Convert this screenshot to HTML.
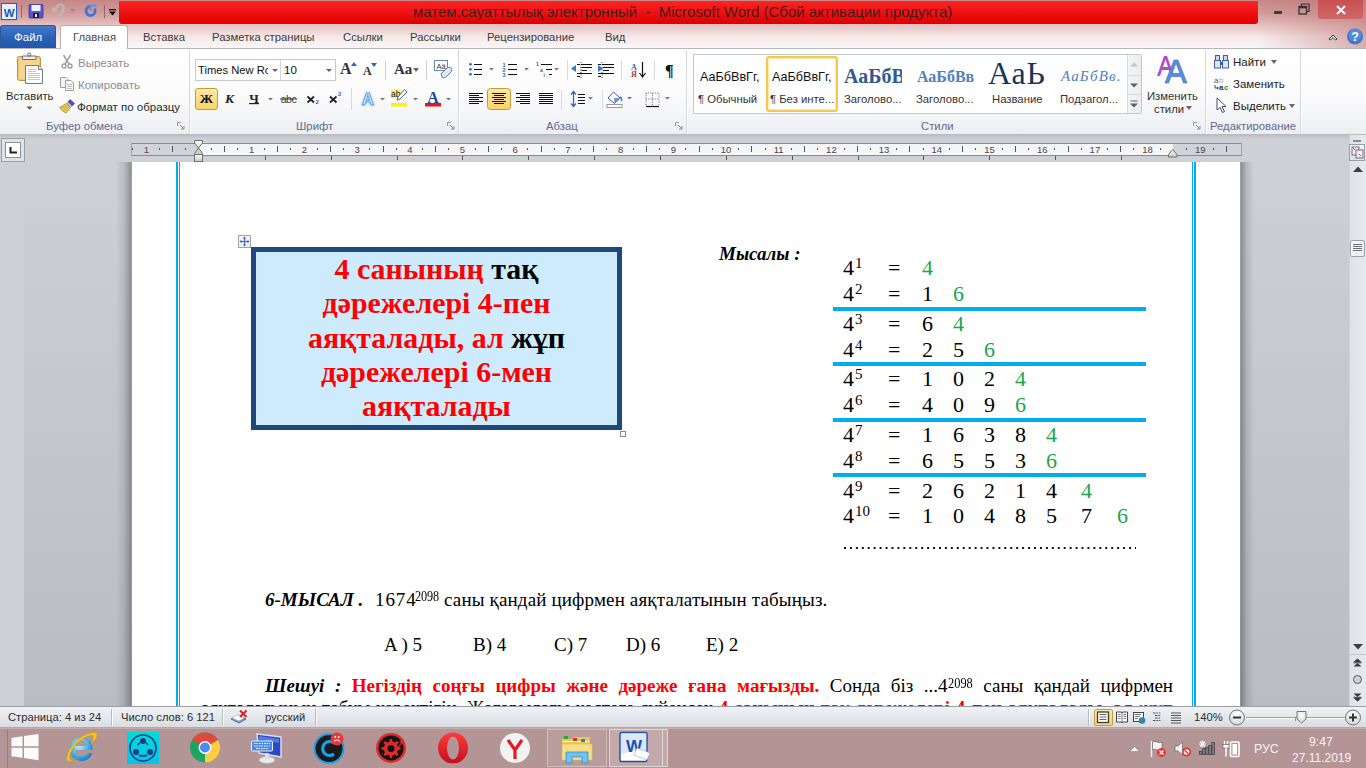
<!DOCTYPE html>
<html><head><meta charset="utf-8">
<style>
*{margin:0;padding:0;box-sizing:border-box}
html,body{width:1366px;height:768px;overflow:hidden;background:#cdd0d5;font-family:"Liberation Sans",sans-serif}
.a{position:absolute;white-space:nowrap}
.s{font-family:"Liberation Sans",sans-serif}
.r{font-family:"Liberation Serif",serif}
#frame{position:absolute;left:0;top:0;width:1366px;height:49px;background:linear-gradient(90deg,rgba(190,115,115,0) 0%,rgba(190,115,115,0) 92%,rgba(190,115,115,0.55) 100%),linear-gradient(180deg,#c78787 0%,#d39d9d 28%,#e6c3c3 52%,#f6e9e9 76%,#fcf7f7 100%)}
#redbar{position:absolute;left:119px;top:1px;width:1139px;height:23px;background:linear-gradient(180deg,#ff2424,#dd0000);border-radius:0 0 3px 3px}
#ribbon{position:absolute;left:0;top:48px;width:1366px;height:87px;background:linear-gradient(180deg,#ffffff 0%,#fbfbfc 55%,#eceef2 100%);border-top:1px solid #b4b7bc;border-bottom:1px solid #9ca0a6}
.sep{position:absolute;top:50px;width:2px;height:84px;border-left:1px solid #d6d8dc;border-right:1px solid #ffffff}
.glab{position:absolute;top:120px;font-size:11.3px;color:#636a8e;white-space:nowrap}
.tab{position:absolute;top:31px;font-size:11.3px;color:#3b3b3b;white-space:nowrap}
#page{position:absolute;left:132px;top:162px;width:1108px;height:544px;background:#fff}
#status{position:absolute;left:0;top:706px;width:1366px;height:22px;background:linear-gradient(180deg,#f0f2f5,#d9dde2);border-top:1px solid #9a9ea5;border-bottom:1px solid #a9adb3}
#task{position:absolute;left:0;top:728px;width:1366px;height:40px;background:#b49595}
.t{position:absolute;font-family:"Liberation Serif",serif;font-size:22px;line-height:1;white-space:nowrap;color:#000}
.t sup{font-size:15px;vertical-align:0;position:relative;top:-7px;margin-left:1px}
.g{color:#1aa64b}
.sp{font-size:14.4px;vertical-align:0;position:relative;top:-4px;display:inline-block;transform:scaleX(0.86);transform-origin:0 0;margin-right:-3.5px;line-height:1}
.tb{position:absolute;left:256px;width:361px;text-align:center;font-family:"Liberation Serif",serif;font-weight:bold;font-size:29.9px;line-height:1;color:#ff0000;white-space:nowrap}
.k{color:#000}
</style></head><body>

<div id="frame"></div>
<div id="redbar"></div>
<div class="a s" style="left:413px;top:3px;font-size:15px;color:#461a1a">матем.сауаттылық электронный&nbsp; - &nbsp;Microsoft Word (Сбой активации продукта)</div>


<!-- quick access -->
<svg class="a" style="left:0;top:2px" width="120" height="20" viewBox="0 0 120 20">
 <rect x="1.5" y="1.5" width="15" height="16" fill="#fff" stroke="#2a62b8" stroke-width="1.2"/>
 <rect x="2.5" y="2.5" width="13" height="14" fill="#e8f0fb"/>
 <text x="9" y="14.5" font-family="Liberation Sans" font-weight="bold" font-size="11.5" fill="#1f55b8" text-anchor="middle" letter-spacing="-0.5">W</text>
 <line x1="21.5" y1="3" x2="21.5" y2="16" stroke="#8a6a6a" stroke-width="1"/>
 <rect x="29" y="2.5" width="14" height="13.5" rx="1" fill="#5b55c9" stroke="#3a3a9a" stroke-width="0.8"/>
 <rect x="31.5" y="3" width="9" height="6" fill="#eef2ff"/>
 <rect x="33" y="11" width="6" height="5" fill="#202030"/>
 <rect x="35" y="12" width="2" height="3" fill="#e8e8e8"/>
 <path d="M55.5 7.5 C57 3.5 60 2 62 3 C64.5 4.5 64 9.5 59.5 14" fill="none" stroke="#bdb5b5" stroke-width="2.6" stroke-linecap="round"/>
 <path d="M52 4 L52 10 L58 10 Z" fill="#bdb5b5"/>
 <path d="M70 7 L75 7 L72.5 10 Z" fill="#9a8585"/>
 <path d="M90.3 4.3 A4.6 4.6 0 1 0 94.6 6.6" fill="none" stroke="#3a74d6" stroke-width="2.7"/>
 <path d="M89.3 2.6 L96.6 2.6 L96.6 4.6 L91.6 4.6 L91.6 8.6 L89.3 8.6 Z" fill="#5a92ea"/>
 <line x1="104.5" y1="3" x2="104.5" y2="16" stroke="#8a6a6a" stroke-width="1"/>
 <rect x="109" y="7" width="7" height="1.3" fill="#111"/>
 <path d="M109 9.5 L116 9.5 L112.5 13.5 Z" fill="#111"/>
</svg>
<!-- window controls -->
<div class="a" style="left:1274px;top:11px;width:8px;height:3px;background:#3a3a3a;border-radius:1px"></div>
<svg class="a" style="left:1298px;top:3px" width="12" height="12" viewBox="0 0 12 12"><rect x="1" y="3.5" width="7.5" height="7.5" fill="none" stroke="#333" stroke-width="1.3"/><rect x="1" y="3.5" width="7.5" height="1.8" fill="#333"/><path d="M3.5 3.5 L3.5 1 L11 1 L11 8.5 L8.5 8.5" fill="none" stroke="#333" stroke-width="1.2"/></svg>
<div class="a" style="left:1318px;top:0;width:45px;height:19px;background:linear-gradient(180deg,#c85050,#d06868);border-radius:0 0 3px 3px"></div>
<svg class="a" style="left:1335px;top:5px" width="12" height="10" viewBox="0 0 12 10"><path d="M2 1 L10 9 M10 1 L2 9" stroke="#fff" stroke-width="2"/></svg>
<!-- help -->
<svg class="a" style="left:1323px;top:27px" width="43" height="20" viewBox="0 0 43 20">
 <path d="M6 12 L10 8 L14 12 L12.5 13 L10 10.5 L7.5 13 Z" fill="#fff" stroke="#333" stroke-width="1"/>
 <circle cx="32" cy="9.5" r="8" fill="#3f78cc"/><circle cx="32" cy="8" r="6.5" fill="#5d92de" opacity="0.7"/>
 <text x="32" y="14" font-family="Liberation Sans" font-weight="bold" font-size="12.5" fill="#fff" text-anchor="middle">?</text>
</svg>

<!-- tabs -->
<div class="a" style="left:0;top:25px;width:56px;height:23px;background:linear-gradient(180deg,#4278c8,#2a5fb5 60%,#2256ac);border:1px solid #2a56a0;border-bottom:none;border-radius:3px 3px 0 0"></div>
<div class="a s" style="left:14px;top:31px;font-size:11.5px;color:#fff">Файл</div>
<div class="a" style="left:60px;top:25px;width:68px;height:24px;background:#fff;border:1px solid #b0b3b8;border-bottom:none;border-radius:3px 3px 0 0;z-index:2"></div>
<div class="tab" style="left:73px;z-index:3;color:#4a4a4a">Главная</div>
<div class="tab" style="left:143px">Вставка</div>
<div class="tab" style="left:212px">Разметка страницы</div>
<div class="tab" style="left:343px">Ссылки</div>
<div class="tab" style="left:410px">Рассылки</div>
<div class="tab" style="left:487px">Рецензирование</div>
<div class="tab" style="left:605px">Вид</div>

<div id="ribbon"></div>
<div class="sep" style="left:189px"></div>
<div class="sep" style="left:458px"></div>
<div class="sep" style="left:686px"></div>
<div class="sep" style="left:1205px"></div>
<div class="sep" style="left:1300px"></div>
<div class="glab" style="left:46px">Буфер обмена</div>
<div class="glab" style="left:296px">Шрифт</div>
<div class="glab" style="left:546px">Абзац</div>
<div class="glab" style="left:921px">Стили</div>
<div class="glab" style="left:1210px">Редактирование</div>
<!-- group: clipboard -->
<svg class="a" style="left:14px;top:52px" width="32" height="36" viewBox="0 0 32 36">
 <rect x="3.5" y="4.5" width="23" height="24" rx="2" fill="#f2c46a" stroke="#c09048" stroke-width="1"/>
 <rect x="5" y="6" width="20" height="21" rx="1" fill="#f7d58e"/>
 <path d="M8.5 4 L22 4 L22 7.5 L8.5 7.5 Z" fill="#eeeeee" stroke="#6e6e6e" stroke-width="1"/>
 <circle cx="15.2" cy="2.6" r="1.6" fill="none" stroke="#6e6e6e" stroke-width="1"/>
 <path d="M11.5 13.5 L24.5 13.5 L28.5 17.5 L28.5 31.5 L11.5 31.5 Z" fill="#fff" stroke="#6e7c8e" stroke-width="1"/>
 <path d="M24.5 13.5 L24.5 17.5 L28.5 17.5" fill="#e2e8f0" stroke="#6e7c8e" stroke-width="1"/>
 <path d="M14 17.5 H22 M14 19.5 H22 M14 21.5 H26 M14 23.5 H26 M14 25.5 H26 M14 27.5 H26" stroke="#b9c6d6" stroke-width="1"/>
</svg>
<div class="a" style="left:6px;top:89.5px;font-size:11.2px;color:#2b2b2b">Вставить</div>
<svg class="a" style="left:26px;top:106px" width="7" height="5"><path d="M0.5 0.5 L6.5 0.5 L3.5 3.8 Z" fill="#555"/></svg>

<svg class="a" style="left:60px;top:54px" width="14" height="15" viewBox="0 0 14 15">
 <path d="M3.5 1 L9 10 M10.5 1 L5 10" stroke="#a0a0a0" stroke-width="1.5" fill="none"/>
 <circle cx="4" cy="12" r="2" fill="none" stroke="#9a9a9a" stroke-width="1.3"/>
 <circle cx="10" cy="12" r="2" fill="none" stroke="#9a9a9a" stroke-width="1.3"/>
</svg>
<div class="a" style="left:78px;top:56.5px;font-size:11.5px;color:#8d8d8d">Вырезать</div>
<svg class="a" style="left:59px;top:76px" width="16" height="15" viewBox="0 0 16 15">
 <path d="M1.5 1.5 H7 L9 3.5 V11.5 H1.5 Z" fill="#f4f4f4" stroke="#9c9c9c" stroke-width="1"/>
 <path d="M6.5 4.5 H12 L14.5 7 V14.5 H6.5 Z" fill="#f8f8f8" stroke="#9c9c9c" stroke-width="1"/>
 <path d="M8 8.5 H13 M8 10.5 H13 M8 12.5 H13" stroke="#b4b4b4" stroke-width="0.8"/>
</svg>
<div class="a" style="left:78px;top:78.5px;font-size:11.5px;color:#8d8d8d">Копировать</div>
<svg class="a" style="left:58px;top:98px" width="18" height="16" viewBox="0 0 18 16">
 <path d="M12 1.5 L16.5 5.5 L14 8 L10 4 Z" fill="#5050b8" stroke="#303080" stroke-width="0.6"/>
 <path d="M10 4 L14 8 L12.5 9.5 L8.5 5.5 Z" fill="#c8c8d0" stroke="#777" stroke-width="0.5"/>
 <path d="M8.5 5.5 L12.5 9.5 L8 15 C6 14 3 12 1.5 9.5 Z" fill="#e8cc58" stroke="#9a7e2a" stroke-width="0.7"/>
 <path d="M3.5 10 L9.5 8 M5.5 12.5 L10.5 9.5" stroke="#b89a30" stroke-width="0.6"/>
</svg>
<div class="a" style="left:77px;top:100.5px;font-size:11.5px;color:#2b2b2b">Формат по образцу</div>
<svg class="a" style="left:177px;top:122px" width="8" height="8" viewBox="0 0 8 8"><path d="M0.5 0.5 H4 M0.5 0.5 V4" stroke="#9a9a9a" stroke-width="1"/><path d="M3 3 L7 7 M7 4 V7 H4" stroke="#8a8a8a" stroke-width="1" fill="none"/></svg>
<svg class="a" style="left:447px;top:122px" width="8" height="8" viewBox="0 0 8 8"><path d="M0.5 0.5 H4 M0.5 0.5 V4" stroke="#9a9a9a" stroke-width="1"/><path d="M3 3 L7 7 M7 4 V7 H4" stroke="#8a8a8a" stroke-width="1" fill="none"/></svg>
<svg class="a" style="left:675px;top:122px" width="8" height="8" viewBox="0 0 8 8"><path d="M0.5 0.5 H4 M0.5 0.5 V4" stroke="#9a9a9a" stroke-width="1"/><path d="M3 3 L7 7 M7 4 V7 H4" stroke="#8a8a8a" stroke-width="1" fill="none"/></svg>
<svg class="a" style="left:1193px;top:122px" width="8" height="8" viewBox="0 0 8 8"><path d="M0.5 0.5 H4 M0.5 0.5 V4" stroke="#9a9a9a" stroke-width="1"/><path d="M3 3 L7 7 M7 4 V7 H4" stroke="#8a8a8a" stroke-width="1" fill="none"/></svg>

<!-- group: font -->
<div class="a" style="left:195px;top:59px;width:141px;height:22px;background:#fff;border:1px solid #c5c8cd"></div>
<div class="a" style="left:280px;top:60px;width:1px;height:20px;background:#d4d6da"></div>
<div class="a" style="left:198px;top:63.5px;width:70px;overflow:hidden;font-size:11.2px;color:#111">Times New Roman</div>
<svg class="a" style="left:272px;top:69px" width="6" height="3"><path d="M0 0 H6 L3 3 Z" fill="#666"/></svg>
<div class="a" style="left:284px;top:63.5px;font-size:11.5px;color:#111">10</div>
<svg class="a" style="left:326px;top:69px" width="6" height="3"><path d="M0 0 H6 L3 3 Z" fill="#666"/></svg>
<div class="a r" style="left:340px;top:61px;font-size:16px;font-weight:bold;color:#333;line-height:1">A</div>
<svg class="a" style="left:351px;top:62px" width="6" height="4"><path d="M0 4 L3 0 L6 4 Z" fill="#2a64c8"/></svg>
<div class="a r" style="left:363px;top:65px;font-size:12px;font-weight:bold;color:#333;line-height:1">A</div>
<svg class="a" style="left:371px;top:63px" width="6" height="4"><path d="M0 0 L6 0 L3 4 Z" fill="#2a64c8"/></svg>
<div class="a" style="left:385px;top:60px;width:2px;height:20px;border-left:1px solid #cfd1d5;border-right:1px solid #fff"></div>
<div class="a r" style="left:394px;top:62px;font-size:15px;font-weight:bold;color:#333;line-height:1">Aa</div>
<svg class="a" style="left:413px;top:68px" width="6" height="4"><path d="M0 0 H6 L3 4 Z" fill="#666"/></svg>
<div class="a" style="left:426px;top:60px;width:2px;height:20px;border-left:1px solid #cfd1d5;border-right:1px solid #fff"></div>
<svg class="a" style="left:433px;top:59px" width="20" height="20" viewBox="0 0 20 20">
 <rect x="1.5" y="1.5" width="13" height="10" fill="#fff" stroke="#6a87b0" stroke-width="1"/>
 <text x="8" y="9.5" font-family="Liberation Sans" font-size="7.5" fill="#334" text-anchor="middle">Aä</text>
 <path d="M8 15 L14 9 C15 8 17 8 18 9 C19 10 19 12 18 13 L13 18 C12 19 10 19 9 18 Z" fill="#dfe8f6" stroke="#5a7db5" stroke-width="1"/>
</svg>
<!-- row 2 -->
<div class="a" style="left:195px;top:88px;width:23px;height:22px;background:linear-gradient(180deg,#fde9a6,#fbd36a);border:1px solid #c29b3f;border-radius:3px"></div>
<svg class="a" style="left:195px;top:88px" width="260" height="22" viewBox="0 0 260 22">
 <text x="11.5" y="15.2" font-family="Liberation Serif" font-weight="bold" font-size="13.5" fill="#111" text-anchor="middle">Ж</text>
 <text x="34.5" y="15.2" font-family="Liberation Serif" font-weight="bold" font-style="italic" font-size="13.5" fill="#222" text-anchor="middle">К</text>
 <text x="59" y="14.8" font-family="Liberation Serif" font-weight="bold" font-size="13" fill="#222" text-anchor="middle">Ч</text>
 <rect x="54" y="15" width="10" height="1.2" fill="#222"/>
 <path d="M73 10 H78 L75.5 12.5 Z" fill="#777"/>
 <text x="93.5" y="15" font-family="Liberation Sans" font-size="10.5" fill="#444" text-anchor="middle" letter-spacing="-0.4">abc</text>
 <rect x="85" y="10.5" width="17" height="1" fill="#333"/>
 <path d="M112.5 8.5 L119 14.5 M119 8.5 L112.5 14.5" stroke="#222" stroke-width="1.8"/>
 <text x="120.5" y="15.5" font-family="Liberation Sans" font-weight="bold" font-size="6" fill="#2a64c8">2</text>
 <path d="M135 8.5 L141.5 14.5 M141.5 8.5 L135 14.5" stroke="#222" stroke-width="1.8"/>
 <text x="143" y="7.5" font-family="Liberation Sans" font-weight="bold" font-size="6" fill="#2a64c8">2</text>
 <line x1="156.5" y1="0" x2="156.5" y2="22" stroke="#d6d8dc"/>
 <text x="173" y="17" font-family="Liberation Sans" font-weight="bold" font-size="17" fill="#dff0ff" stroke="#5a9ae4" stroke-width="1" text-anchor="middle" style="filter:drop-shadow(0 0 1.5px #9fd0ff)">A</text>
 <path d="M185 10 H190 L187.5 12.5 Z" fill="#777"/>
 <rect x="196" y="2" width="10" height="8" fill="#f4ee72"/>
 <text x="196" y="9" font-family="Liberation Sans" font-size="8.5" fill="#222">ab</text>
 <path d="M209.5 1.5 L212 4 L205 11 L202 12 L203 9 Z" fill="#fff" stroke="#3d67b0" stroke-width="1"/>
 <rect x="196" y="15" width="16" height="3.5" fill="#fff200"/>
 <path d="M218 10 H223 L220.5 12.5 Z" fill="#777"/>
 <text x="238" y="14.5" font-family="Liberation Serif" font-weight="bold" font-size="16" fill="#2346a0" text-anchor="middle">A</text>
 <rect x="230" y="15" width="16" height="3.5" fill="#e8141b"/>
 <path d="M251 10 H256 L253.5 12.5 Z" fill="#777"/>
</svg>
<!-- group: paragraph -->
<svg class="a" style="left:460px;top:55px" width="226" height="60" viewBox="0 0 226 60">
 <g fill="#2f5fb8"><circle cx="10.5" cy="9.3" r="1.3"/><circle cx="10.5" cy="14.3" r="1.3"/><circle cx="10.5" cy="19.3" r="1.3"/></g>
 <path d="M14 9.5 H22 M14 14.5 H22 M14 19.5 H22" stroke="#111" stroke-width="1"/>
 <path d="M29 13 H34 L31.5 15.5 Z" fill="#777"/>
 <g font-family="Liberation Sans" font-size="5.5" font-weight="bold" fill="#2f5fb8"><text x="42.5" y="11.5">1</text><text x="42.5" y="16.5">2</text><text x="42.5" y="21.5">3</text></g>
 <path d="M48 9.5 H57 M48 14.5 H57 M48 19.5 H57" stroke="#111" stroke-width="1"/>
 <path d="M64 13 H69 L66.5 15.5 Z" fill="#777"/>
 <g font-family="Liberation Sans" font-size="5" font-weight="bold" fill="#2f5fb8"><text x="76" y="11">1</text><text x="80" y="16.5">a</text><text x="83.5" y="22">i</text></g>
 <path d="M81 9.5 H92 M86 14.5 H92 M89 19.5 H92" stroke="#111" stroke-width="1"/>
 <path d="M94 13 H99 L96.5 15.5 Z" fill="#777"/>
 <line x1="107.5" y1="5" x2="107.5" y2="25" stroke="#d8dadd"/>
 <!-- decrease indent -->
 <path d="M117 9.5 H120 M121 9.5 H132 M122 12.5 H132 M122 15.5 H127 M117 18.5 H132 M117 21.5 H120" stroke="#111" stroke-width="1.2"/>
 <path d="M121 12 V16 M121 7 V24" stroke="#111" stroke-width="0.8" stroke-dasharray="1 1.5"/>
 <path d="M111 13.5 L116 10 L116 17 Z" fill="#3a78d8"/>
 <path d="M138 9.5 H141 M142 9.5 H154 M143 12.5 H154 M143 15.5 H149 M138 18.5 H154 M138 21.5 H141" stroke="#111" stroke-width="1.2"/>
 <path d="M142 7 V24" stroke="#111" stroke-width="0.8" stroke-dasharray="1 1.5"/>
 <path d="M143 13.5 L138 10 L138 17 Z" fill="#3a78d8"/>
 <line x1="161.5" y1="5" x2="161.5" y2="25" stroke="#d8dadd"/>
 <text x="171" y="15" font-family="Liberation Serif" font-weight="bold" font-size="8" fill="#2f5fb8">A</text>
 <text x="171" y="22" font-family="Liberation Serif" font-weight="bold" font-size="8" fill="#a04040">Я</text>
 <path d="M182.5 7 V21" stroke="#111" stroke-width="1.2"/><path d="M179.5 18 L182.5 22 L185.5 18" fill="none" stroke="#111" stroke-width="1.2"/>
 <line x1="194.5" y1="5" x2="194.5" y2="25" stroke="#d8dadd"/>
 <text x="205" y="21" font-family="Liberation Serif" font-weight="bold" font-size="16" fill="#111">¶</text>
 <!-- row 2 -->
 <path d="M9 38.5 H23 M9 40.5 H19 M9 42.5 H23 M9 44.5 H19 M9 46.5 H23 M9 48.5 H19" stroke="#111" stroke-width="1"/>
 <rect x="27.5" y="33.5" width="23" height="21" rx="3" fill="url(#gold)" stroke="#c29b3f"/>
 <path d="M32 38.5 H46 M34 40.5 H44 M32 42.5 H46 M34 44.5 H44 M32 46.5 H46 M34 48.5 H44" stroke="#111" stroke-width="1"/>
 <path d="M56 38.5 H70 M60 40.5 H70 M56 42.5 H70 M60 44.5 H70 M56 46.5 H70 M60 48.5 H70" stroke="#111" stroke-width="1"/>
 <path d="M79 38.5 H93 M79 40.5 H93 M79 42.5 H93 M79 44.5 H93 M79 46.5 H93 M79 48.5 H93" stroke="#111" stroke-width="1"/>
 <line x1="101.5" y1="35" x2="101.5" y2="55" stroke="#d8dadd"/>
 <path d="M113.5 37 V51" stroke="#2f5fb8" stroke-width="1.2"/><path d="M111 39.5 L113.5 36.5 L116 39.5 M111 48.5 L113.5 51.5 L116 48.5" fill="none" stroke="#2f5fb8" stroke-width="1.2"/>
 <path d="M118 39.5 H125 M118 42.5 H125 M118 45.5 H125 M118 48.5 H125" stroke="#111" stroke-width="1.1"/>
 <path d="M128 42 H133 L130.5 44.5 Z" fill="#777"/>
 <line x1="142.5" y1="35" x2="142.5" y2="55" stroke="#d8dadd"/>
 <path d="M148 43 L153.5 37 L160 43 L154.5 48.5 Z" fill="#fff" stroke="#2f5fb8" stroke-width="1"/>
 <path d="M154 43 L160 43 L154.5 48.5 Z" fill="#6a96dc"/>
 <path d="M160 42 C162 43 162 45 161 46" stroke="#3a78d8" stroke-width="1.5" fill="none"/>
 <rect x="147" y="49.5" width="15" height="3" fill="#fff" stroke="#999" stroke-width="1"/>
 <path d="M167 42 H172 L169.5 44.5 Z" fill="#777"/>
 <path d="M186 38 H199 V50 M186 38 V50 M192.5 38 V50 M186 44 H199" stroke="#555" stroke-width="0.8" stroke-dasharray="1 1.2" fill="none"/>
 <path d="M186 51.5 H199" stroke="#111" stroke-width="1.2"/>
 <path d="M205 42 H210 L207.5 44.5 Z" fill="#777"/>
 <defs><linearGradient id="gold" x1="0" y1="0" x2="0" y2="1"><stop offset="0" stop-color="#fde9a6"/><stop offset="1" stop-color="#fbd36a"/></linearGradient></defs>
</svg>
<!-- group: styles -->
<div class="a" style="left:693px;top:54px;width:449px;height:60px;background:#fff;border:1px solid #c4c7cc;border-radius:0 2px 2px 0"></div>
<div class="a" style="left:1127px;top:55px;width:14px;height:58px;background:linear-gradient(90deg,#f4f5f7,#e9ebee);border-left:1px solid #d8dadd"></div>
<div class="a" style="left:1127px;top:75px;width:14px;height:1px;background:#d8dadd"></div>
<div class="a" style="left:1127px;top:94px;width:14px;height:1px;background:#d8dadd"></div>
<svg class="a" style="left:1130px;top:62px" width="8" height="5"><path d="M0 4.5 L4 0.5 L8 4.5 Z" fill="#c4c4c4"/></svg>
<svg class="a" style="left:1130px;top:83px" width="8" height="5"><path d="M0 0.5 L8 0.5 L4 4.5 Z" fill="#606060"/></svg>
<svg class="a" style="left:1130px;top:100px" width="8" height="8"><path d="M0.5 1 H7.5" stroke="#606060" stroke-width="1"/><path d="M0 3.5 L8 3.5 L4 7.5 Z" fill="#606060"/></svg>
<div class="a" style="left:766px;top:56px;width:72px;height:56px;border:2px solid #f4c653;border-radius:3px;box-shadow:inset 0 0 0 1px #ffeaa6"></div>
<div class="a s" style="left:700px;top:70.5px;font-size:12.6px;color:#111;line-height:1">АаБбВвГг,</div>
<div class="a s" style="left:698px;top:93.5px;font-size:11.3px;color:#333;line-height:1">¶ Обычный</div>
<div class="a s" style="left:772px;top:70.5px;font-size:12.6px;color:#111;line-height:1">АаБбВвГг,</div>
<div class="a s" style="left:770px;top:93.5px;font-size:11.3px;color:#333;line-height:1">¶ Без инте...</div>
<div class="a" style="left:844px;top:60px;width:58px;height:26px;overflow:hidden"><div class="a r" style="left:0;top:6.4px;font-size:20px;font-weight:bold;color:#2f5a93;line-height:1">АаБбВв</div></div>
<div class="a s" style="left:844px;top:93.5px;font-size:11.3px;color:#333;line-height:1">Заголово...</div>
<div class="a" style="left:916px;top:60px;width:60px;height:26px;overflow:hidden"><div class="a r" style="left:1px;top:9.2px;font-size:16px;font-weight:bold;color:#4f81bd;line-height:1">АаБбВв</div></div>
<div class="a s" style="left:916px;top:93.5px;font-size:11.3px;color:#333;line-height:1">Заголово...</div>
<div class="a r" style="left:988px;top:56.5px;font-size:32px;color:#17365d;line-height:1;letter-spacing:0.8px">АаЬ</div>
<div class="a s" style="left:992px;top:93.5px;font-size:11.3px;color:#333;line-height:1">Название</div>
<div class="a r" style="left:1061px;top:68.6px;font-size:15px;font-style:italic;color:#4f81bd;line-height:1;letter-spacing:1.2px">АаБбВв.</div>
<div class="a s" style="left:1060px;top:93.5px;font-size:11.3px;color:#333;line-height:1">Подзагол...</div>

<svg class="a" style="left:1155px;top:54px" width="36" height="31" viewBox="0 0 36 31">
 <path d="M2 22 L9 2 L12 2 L19 22 L16 22 L14 16 L7 16 L5 22 Z M8 13 L13 13 L10.5 5.5 Z" fill="#b44bc8"/>
 <path d="M10 29 L19 6 L23 6 L32 29 L28.5 29 L26 22.5 L16 22.5 L13.5 29 Z M17 19.5 L25 19.5 L21 9 Z" fill="#5b8ee0" stroke="#3a68b8" stroke-width="0.6"/>
</svg>
<div class="a s" style="left:1147px;top:90.5px;font-size:11.3px;color:#333;line-height:1">Изменить</div>
<div class="a s" style="left:1154px;top:103.5px;font-size:11.3px;color:#333;line-height:1">стили</div>
<svg class="a" style="left:1186px;top:106px" width="6" height="4"><path d="M0 0 H6 L3 4 Z" fill="#666"/></svg>

<!-- group: editing -->
<svg class="a" style="left:1213px;top:54px" width="17" height="15" viewBox="0 0 17 15">
 <rect x="1.5" y="6.5" width="6" height="7.5" fill="#dfe8f6" stroke="#3a5ea8" stroke-width="1"/>
 <rect x="9.5" y="6.5" width="6" height="7.5" fill="#dfe8f6" stroke="#3a5ea8" stroke-width="1"/>
 <rect x="2.5" y="1.5" width="4" height="5" fill="#c9d8f0" stroke="#3a5ea8" stroke-width="1"/>
 <rect x="10.5" y="1.5" width="4" height="5" fill="#c9d8f0" stroke="#3a5ea8" stroke-width="1"/>
 <rect x="7" y="8" width="3" height="3" fill="#3a5ea8"/>
</svg>
<div class="a s" style="left:1233px;top:56.5px;font-size:11.5px;color:#222;line-height:1">Найти</div>
<svg class="a" style="left:1271px;top:60px" width="6" height="4"><path d="M0 0 H6 L3 4 Z" fill="#666"/></svg>
<svg class="a" style="left:1213px;top:76px" width="18" height="15" viewBox="0 0 18 15">
 <text x="1" y="7" font-family="Liberation Sans" font-size="8" fill="#555">a</text><text x="6" y="7" font-family="Liberation Sans" font-size="8" fill="#aaa">b</text>
 <path d="M2 9 V12 H5" stroke="#2a4f9a" stroke-width="1" fill="none"/><path d="M4 10.5 L6 12 L4 13.5" fill="#2a4f9a"/>
 <text x="6" y="14" font-family="Liberation Sans" font-weight="bold" font-size="8" fill="#333">a</text><text x="11" y="14" font-family="Liberation Sans" font-weight="bold" font-size="8" fill="#1a9a2a">c</text>
</svg>
<div class="a s" style="left:1233px;top:78.5px;font-size:11.5px;color:#222;line-height:1">Заменить</div>
<svg class="a" style="left:1216px;top:97px" width="11" height="17" viewBox="0 0 11 17">
 <path d="M1 1 L1 13 L4 10.5 L6.5 15.5 L8.5 14.5 L6 9.5 L10 9.5 Z" fill="#fff" stroke="#3a5070" stroke-width="1"/>
</svg>
<div class="a s" style="left:1233px;top:100.5px;font-size:11.5px;color:#222;line-height:1">Выделить</div>
<svg class="a" style="left:1289px;top:104px" width="6" height="4"><path d="M0 0 H6 L3 4 Z" fill="#666"/></svg>


<!-- ruler area -->
<div class="a" style="left:0;top:134px;width:1366px;height:28px;background:linear-gradient(180deg,#b4b8be 0px,#c6c9ce 3px,#cdd0d5 6px)"></div>
<div class="a" style="left:24px;top:162px;width:1325px;height:544px;background:linear-gradient(180deg,#cdd0d5,#b9bcc1)"></div>
<div class="a" style="left:131px;top:143px;width:1111px;height:13px;background:#d0d4da;border-top:1px solid #868b93;border-bottom:1px solid #868b93;border-left:1px solid #a0a4ab;border-right:1px solid #a0a4ab"></div>
<div class="a" style="left:199px;top:144px;width:973.7px;height:11px;background:#f5f5f5"></div>
<svg class="a" style="left:0;top:136px" width="1349" height="27" viewBox="0 0 1349 27">
<rect x="132" y="12" width="1" height="2" fill="#555"/>
<text x="146.3" y="16.6" font-family="Liberation Sans" font-size="9.5" fill="#4e4450" text-anchor="middle">1</text>
<rect x="159" y="12" width="1" height="2" fill="#555"/>
<rect x="172" y="10" width="1" height="6" fill="#555"/>
<rect x="185" y="12" width="1" height="2" fill="#555"/>
<rect x="211" y="12" width="1" height="2" fill="#555"/>
<rect x="224" y="10" width="1" height="6" fill="#555"/>
<rect x="237" y="12" width="1" height="2" fill="#555"/>
<text x="251.7" y="16.6" font-family="Liberation Sans" font-size="9.5" fill="#4e4450" text-anchor="middle">1</text>
<rect x="264" y="12" width="1" height="2" fill="#555"/>
<rect x="277" y="10" width="1" height="6" fill="#555"/>
<rect x="290" y="12" width="1" height="2" fill="#555"/>
<text x="304.4" y="16.6" font-family="Liberation Sans" font-size="9.5" fill="#4e4450" text-anchor="middle">2</text>
<rect x="317" y="12" width="1" height="2" fill="#555"/>
<rect x="330" y="10" width="1" height="6" fill="#555"/>
<rect x="343" y="12" width="1" height="2" fill="#555"/>
<text x="357.1" y="16.6" font-family="Liberation Sans" font-size="9.5" fill="#4e4450" text-anchor="middle">3</text>
<rect x="369" y="12" width="1" height="2" fill="#555"/>
<rect x="383" y="10" width="1" height="6" fill="#555"/>
<rect x="396" y="12" width="1" height="2" fill="#555"/>
<text x="409.8" y="16.6" font-family="Liberation Sans" font-size="9.5" fill="#4e4450" text-anchor="middle">4</text>
<rect x="422" y="12" width="1" height="2" fill="#555"/>
<rect x="435" y="10" width="1" height="6" fill="#555"/>
<rect x="448" y="12" width="1" height="2" fill="#555"/>
<text x="462.5" y="16.6" font-family="Liberation Sans" font-size="9.5" fill="#4e4450" text-anchor="middle">5</text>
<rect x="475" y="12" width="1" height="2" fill="#555"/>
<rect x="488" y="10" width="1" height="6" fill="#555"/>
<rect x="501" y="12" width="1" height="2" fill="#555"/>
<text x="515.2" y="16.6" font-family="Liberation Sans" font-size="9.5" fill="#4e4450" text-anchor="middle">6</text>
<rect x="527" y="12" width="1" height="2" fill="#555"/>
<rect x="541" y="10" width="1" height="6" fill="#555"/>
<rect x="554" y="12" width="1" height="2" fill="#555"/>
<text x="567.9" y="16.6" font-family="Liberation Sans" font-size="9.5" fill="#4e4450" text-anchor="middle">7</text>
<rect x="580" y="12" width="1" height="2" fill="#555"/>
<rect x="593" y="10" width="1" height="6" fill="#555"/>
<rect x="606" y="12" width="1" height="2" fill="#555"/>
<text x="620.6" y="16.6" font-family="Liberation Sans" font-size="9.5" fill="#4e4450" text-anchor="middle">8</text>
<rect x="633" y="12" width="1" height="2" fill="#555"/>
<rect x="646" y="10" width="1" height="6" fill="#555"/>
<rect x="659" y="12" width="1" height="2" fill="#555"/>
<text x="673.3" y="16.6" font-family="Liberation Sans" font-size="9.5" fill="#4e4450" text-anchor="middle">9</text>
<rect x="685" y="12" width="1" height="2" fill="#555"/>
<rect x="699" y="10" width="1" height="6" fill="#555"/>
<rect x="712" y="12" width="1" height="2" fill="#555"/>
<text x="726.0" y="16.6" font-family="Liberation Sans" font-size="9.5" fill="#4e4450" text-anchor="middle">10</text>
<rect x="738" y="12" width="1" height="2" fill="#555"/>
<rect x="751" y="10" width="1" height="6" fill="#555"/>
<rect x="765" y="12" width="1" height="2" fill="#555"/>
<text x="778.7" y="16.6" font-family="Liberation Sans" font-size="9.5" fill="#4e4450" text-anchor="middle">11</text>
<rect x="791" y="12" width="1" height="2" fill="#555"/>
<rect x="804" y="10" width="1" height="6" fill="#555"/>
<rect x="817" y="12" width="1" height="2" fill="#555"/>
<text x="831.4" y="16.6" font-family="Liberation Sans" font-size="9.5" fill="#4e4450" text-anchor="middle">12</text>
<rect x="844" y="12" width="1" height="2" fill="#555"/>
<rect x="857" y="10" width="1" height="6" fill="#555"/>
<rect x="870" y="12" width="1" height="2" fill="#555"/>
<text x="884.1" y="16.6" font-family="Liberation Sans" font-size="9.5" fill="#4e4450" text-anchor="middle">13</text>
<rect x="896" y="12" width="1" height="2" fill="#555"/>
<rect x="909" y="10" width="1" height="6" fill="#555"/>
<rect x="923" y="12" width="1" height="2" fill="#555"/>
<text x="936.8" y="16.6" font-family="Liberation Sans" font-size="9.5" fill="#4e4450" text-anchor="middle">14</text>
<rect x="949" y="12" width="1" height="2" fill="#555"/>
<rect x="962" y="10" width="1" height="6" fill="#555"/>
<rect x="975" y="12" width="1" height="2" fill="#555"/>
<text x="989.5" y="16.6" font-family="Liberation Sans" font-size="9.5" fill="#4e4450" text-anchor="middle">15</text>
<rect x="1002" y="12" width="1" height="2" fill="#555"/>
<rect x="1015" y="10" width="1" height="6" fill="#555"/>
<rect x="1028" y="12" width="1" height="2" fill="#555"/>
<text x="1042.2" y="16.6" font-family="Liberation Sans" font-size="9.5" fill="#4e4450" text-anchor="middle">16</text>
<rect x="1054" y="12" width="1" height="2" fill="#555"/>
<rect x="1068" y="10" width="1" height="6" fill="#555"/>
<rect x="1081" y="12" width="1" height="2" fill="#555"/>
<text x="1094.9" y="16.6" font-family="Liberation Sans" font-size="9.5" fill="#4e4450" text-anchor="middle">17</text>
<rect x="1107" y="12" width="1" height="2" fill="#555"/>
<rect x="1120" y="10" width="1" height="6" fill="#555"/>
<rect x="1133" y="12" width="1" height="2" fill="#555"/>
<text x="1147.6" y="16.6" font-family="Liberation Sans" font-size="9.5" fill="#4e4450" text-anchor="middle">18</text>
<rect x="1160" y="12" width="1" height="2" fill="#555"/>

<rect x="1186" y="12" width="1" height="2" fill="#555"/>
<text x="1200.3" y="16.6" font-family="Liberation Sans" font-size="9.5" fill="#4e4450" text-anchor="middle">19</text>
<rect x="1213" y="12" width="1" height="2" fill="#555"/>
<rect x="1226" y="10" width="1" height="6" fill="#555"/>
<rect x="265" y="20" width="1" height="4" fill="#555"/>
<rect x="331" y="20" width="1" height="4" fill="#555"/>
<rect x="397" y="20" width="1" height="4" fill="#555"/>
<rect x="462" y="20" width="1" height="4" fill="#555"/>
<rect x="528" y="20" width="1" height="4" fill="#555"/>
<rect x="594" y="20" width="1" height="4" fill="#555"/>
<rect x="660" y="20" width="1" height="4" fill="#555"/>
<rect x="726" y="20" width="1" height="4" fill="#555"/>
<rect x="792" y="20" width="1" height="4" fill="#555"/>
<rect x="858" y="20" width="1" height="4" fill="#555"/>
<rect x="923" y="20" width="1" height="4" fill="#555"/>
<rect x="989" y="20" width="1" height="4" fill="#555"/>
<rect x="1055" y="20" width="1" height="4" fill="#555"/>
<rect x="1121" y="20" width="1" height="4" fill="#555"/>
<path d="M194.5 4.5 H202.5 V7 L198.5 12 L202.5 17.5 V18.5 H194.5 V17.5 L198.5 12 L194.5 7 Z" fill="url(#hg)" stroke="#6e6e6e" stroke-width="1"/>
<rect x="194.5" y="18.5" width="8" height="7" fill="url(#hg)" stroke="#6e6e6e" stroke-width="1"/>
<path d="M1168.5 18.5 L1172.7 13.5 L1177 18.5 V21 H1168.5 Z" fill="url(#hg)" stroke="#6e6e6e" stroke-width="1"/>
<defs><linearGradient id="hg" x1="0" y1="0" x2="0" y2="1"><stop offset="0" stop-color="#fafafa"/><stop offset="1" stop-color="#c8c8c8"/></linearGradient></defs>
</svg>
<div class="a" style="left:1px;top:138px;width:24px;height:24px;border:1px solid #9a9ea5;background:#dfe2e6"></div>
<div class="a" style="left:5px;top:142px;width:16px;height:16px;border:1px solid #8a8e95;background:#fff"></div>
<svg class="a" style="left:9px;top:146px" width="9" height="9"><path d="M1.5 1 V6.5 H8" stroke="#222" stroke-width="2" fill="none"/></svg>
<!-- page content -->
<div id="page"></div>
<div class="a" style="left:116px;top:162px;width:16px;height:544px;background:linear-gradient(90deg,rgba(0,0,0,0),rgba(40,45,50,0.12) 50%,rgba(40,45,50,0.38) 94%,rgba(40,45,50,0.2) 100%)"></div>
<div class="a" style="left:1240px;top:162px;width:14px;height:544px;background:linear-gradient(90deg,rgba(40,45,50,0.25),rgba(40,45,50,0.38) 12%,rgba(40,45,50,0.15) 45%,rgba(0,0,0,0))"></div>
<div class="a" style="left:176px;top:162px;width:2px;height:544px;background:#00aeef"></div>
<div class="a" style="left:179px;top:162px;width:1px;height:544px;background:#00aeef"></div>
<div class="a" style="left:1192px;top:162px;width:1px;height:544px;background:#00aeef"></div>
<div class="a" style="left:1194px;top:162px;width:2px;height:544px;background:#00aeef"></div>

<!-- textbox -->
<div class="a" style="left:238px;top:235px;width:13px;height:13px;background:#f2f2f2;border:1px solid #a4a4a4">
<svg width="11" height="11" viewBox="0 0 11 11" style="position:absolute;left:0;top:0"><path d="M5.5 1 L5.5 10 M1 5.5 L10 5.5" stroke="#3a6ad4" stroke-width="1.2"/><path d="M5.5 0.5 L3.8 2.5 L7.2 2.5Z M5.5 10.5 L3.8 8.5 L7.2 8.5Z M0.5 5.5 L2.5 3.8 L2.5 7.2Z M10.5 5.5 L8.5 3.8 L8.5 7.2Z" fill="#3a6ad4"/></svg></div>
<div class="a" style="left:251px;top:247px;width:371px;height:183px;background:#cdebfd;border:5px solid #1f497d"></div>
<div class="a" style="left:620px;top:431px;width:6px;height:6px;border:1.5px solid #8a8a8a;background:#fff"></div>
<div class="tb" style="top:254.1px">4 санының <b class="k">тақ</b></div>
<div class="tb" style="top:288.35px">дәрежелері 4-пен</div>
<div class="tb" style="top:322.6px">аяқталады, ал <b class="k">жұп</b></div>
<div class="tb" style="top:356.85px">дәрежелері 6-мен</div>
<div class="tb" style="top:391.1px">аяқталады</div>

<div class="a r" style="left:719px;top:243.7px;font-size:19px;line-height:1;font-weight:bold;font-style:italic">Мысалы :</div>
<div class="a" style="left:833px;top:307px;width:313px;height:4px;background:#00aeef"></div>
<div class="a" style="left:833px;top:362px;width:313px;height:4px;background:#00aeef"></div>
<div class="a" style="left:833px;top:418px;width:313px;height:4px;background:#00aeef"></div>
<div class="a" style="left:833px;top:473px;width:313px;height:4px;background:#00aeef"></div>
<div class="t" style="left:843px;top:257.14px">4<sup>1</sup></div>
<div class="t" style="left:888px;top:257.14px">=</div>
<div class="t g" style="left:922px;top:257.14px">4</div>
<div class="t" style="left:843px;top:283.24px">4<sup>2</sup></div>
<div class="t" style="left:888px;top:283.24px">=</div>
<div class="t" style="left:922px;top:283.24px">1</div>
<div class="t g" style="left:953px;top:283.24px">6</div>
<div class="t" style="left:843px;top:312.94px">4<sup>3</sup></div>
<div class="t" style="left:888px;top:312.94px">=</div>
<div class="t" style="left:922px;top:312.94px">6</div>
<div class="t g" style="left:953px;top:312.94px">4</div>
<div class="t" style="left:843px;top:338.74px">4<sup>4</sup></div>
<div class="t" style="left:888px;top:338.74px">=</div>
<div class="t" style="left:922px;top:338.74px">2</div>
<div class="t" style="left:953px;top:338.74px">5</div>
<div class="t g" style="left:984px;top:338.74px">6</div>
<div class="t" style="left:843px;top:368.34px">4<sup>5</sup></div>
<div class="t" style="left:888px;top:368.34px">=</div>
<div class="t" style="left:922px;top:368.34px">1</div>
<div class="t" style="left:953px;top:368.34px">0</div>
<div class="t" style="left:984px;top:368.34px">2</div>
<div class="t g" style="left:1015px;top:368.34px">4</div>
<div class="t" style="left:843px;top:394.24px">4<sup>6</sup></div>
<div class="t" style="left:888px;top:394.24px">=</div>
<div class="t" style="left:922px;top:394.24px">4</div>
<div class="t" style="left:953px;top:394.24px">0</div>
<div class="t" style="left:984px;top:394.24px">9</div>
<div class="t g" style="left:1015px;top:394.24px">6</div>
<div class="t" style="left:843px;top:424.04px">4<sup>7</sup></div>
<div class="t" style="left:888px;top:424.04px">=</div>
<div class="t" style="left:922px;top:424.04px">1</div>
<div class="t" style="left:953px;top:424.04px">6</div>
<div class="t" style="left:984px;top:424.04px">3</div>
<div class="t" style="left:1015px;top:424.04px">8</div>
<div class="t g" style="left:1046px;top:424.04px">4</div>
<div class="t" style="left:843px;top:449.64px">4<sup>8</sup></div>
<div class="t" style="left:888px;top:449.64px">=</div>
<div class="t" style="left:922px;top:449.64px">6</div>
<div class="t" style="left:953px;top:449.64px">5</div>
<div class="t" style="left:984px;top:449.64px">5</div>
<div class="t" style="left:1015px;top:449.64px">3</div>
<div class="t g" style="left:1046px;top:449.64px">6</div>
<div class="t" style="left:843px;top:479.64px">4<sup>9</sup></div>
<div class="t" style="left:888px;top:479.64px">=</div>
<div class="t" style="left:922px;top:479.64px">2</div>
<div class="t" style="left:953px;top:479.64px">6</div>
<div class="t" style="left:984px;top:479.64px">2</div>
<div class="t" style="left:1015px;top:479.64px">1</div>
<div class="t" style="left:1046px;top:479.64px">4</div>
<div class="t g" style="left:1081px;top:479.64px">4</div>
<div class="t" style="left:843px;top:505.44px">4<sup>10</sup></div>
<div class="t" style="left:888px;top:505.44px">=</div>
<div class="t" style="left:922px;top:505.44px">1</div>
<div class="t" style="left:953px;top:505.44px">0</div>
<div class="t" style="left:984px;top:505.44px">4</div>
<div class="t" style="left:1015px;top:505.44px">8</div>
<div class="t" style="left:1046px;top:505.44px">5</div>
<div class="t" style="left:1081px;top:505.44px">7</div>
<div class="t g" style="left:1117px;top:505.44px">6</div>
<div class="a" style="left:844px;top:547px;width:292px;height:2px;background:linear-gradient(90deg,#111 2px,transparent 2px);background-size:5.95px 2px"></div>

<div class="a r" style="left:265px;top:590.4px;font-size:19px;line-height:1"><b><i>6-МЫСАЛ .</i></b></div>
<div class="a r" id="n1674" style="left:375px;top:590.4px;font-size:19px;line-height:1;letter-spacing:0.9px">1674</div>
<div class="a r" id="n2098" style="left:414.5px;top:589.3px;font-size:14.6px;line-height:1;letter-spacing:-0.2px;transform:scaleX(0.84);transform-origin:0 0">2098</div>
<div class="a r" id="l1rest" style="left:444px;top:590.4px;font-size:19px;line-height:1;letter-spacing:0.15px">саны қандай цифрмен аяқталатынын табыңыз.</div>
<div class="a r" style="left:384px;top:634.7px;font-size:19px;line-height:1">A ) 5</div>
<div class="a r" style="left:473px;top:634.7px;font-size:19px;line-height:1">B) 4</div>
<div class="a r" style="left:554px;top:634.7px;font-size:19px;line-height:1">C) 7</div>
<div class="a r" style="left:626px;top:634.7px;font-size:19px;line-height:1">D) 6</div>
<div class="a r" style="left:706px;top:634.7px;font-size:19px;line-height:1">E) 2</div>
<div class="a r" style="left:265px;top:675.8px;width:908px;font-size:19px;line-height:1;text-align:justify;text-align-last:justify;white-space:normal">
<b><i>Шешуі :</i></b> <b style="color:#ff0000">Негіздің соңғы цифры және дәреже ғана мағызды.</b> Сонда біз ...4<sup class="sp">2098</sup> саны қандай цифрмен</div>
<div class="a" style="left:131px;top:695px;width:1109px;height:11px;overflow:hidden">
<div class="a r" style="left:70px;top:3px;width:972px;font-size:19px;line-height:1;white-space:normal;text-align:justify;text-align-last:justify">аяқталатынын табуы керектігін. Жоғарыдағы кестеге сүйенсек <b style="color:#f00">4 санының <span style="color:#0070c0">тақ</span> дәрежелері 4-пен аяқталады, ал <span style="color:#0070c0">жұп</span></b></div>
</div>

<div id="status"></div>
<div id="task"></div>
<!-- scrollbar -->
<div class="a" style="left:1349px;top:135px;width:17px;height:571px;background:linear-gradient(90deg,#dfe3e9,#e6e9ee);border-left:1px solid #d0d4da"></div>
<div class="a" style="left:1353px;top:140px;width:8px;height:2px;background:#8b8f96"></div>
<div class="a" style="left:1349px;top:144px;width:16px;height:17px;border:1px solid #9a9ea6;background:linear-gradient(180deg,#f4f5f7,#dcdfe4)"></div>
<svg class="a" style="left:1351px;top:146px" width="13" height="13" viewBox="0 0 13 13"><rect x="1" y="1" width="7" height="8" fill="#f6e8ee" stroke="#555" stroke-width="0.8"/><rect x="5" y="4" width="7" height="8" fill="#f6e8ee" stroke="#555" stroke-width="0.8"/><path d="M2 2 L4 4 M8 8 L10 10" stroke="#555" stroke-width="0.8"/></svg>
<svg class="a" style="left:1353px;top:166px" width="10" height="6"><path d="M0 6 L5 0.5 L10 6 Z" fill="#3e3e3e"/></svg>
<div class="a" style="left:1350px;top:240px;width:15px;height:17px;border:1px solid #9ea3aa;border-radius:2px;background:linear-gradient(90deg,#fbfbfc,#e9ebee)"></div>
<div class="a" style="left:1353px;top:244px;width:9px;height:1px;background:#6e7278;box-shadow:0 2px 0 #6e7278,0 4px 0 #6e7278,0 6px 0 #6e7278"></div>
<svg class="a" style="left:1353px;top:644px" width="10" height="6"><path d="M0 0 L10 0 L5 5.5 Z" fill="#3e3e3e"/></svg>
<div class="a" style="left:1349px;top:654px;width:17px;height:1px;background:#c4c8ce"></div>
<svg class="a" style="left:1353px;top:658px" width="9" height="9"><path d="M0.5 4 L4.5 0.5 L8.5 4 Z M0.5 8.5 L4.5 5 L8.5 8.5 Z" fill="#3a3a3a"/><rect x="0.5" y="4.3" width="8" height="1" fill="#3a3a3a"/></svg>
<svg class="a" style="left:1352px;top:674px" width="11" height="11"><circle cx="5.5" cy="5.5" r="4" fill="#d0d2d6" stroke="#555" stroke-width="1"/></svg>
<svg class="a" style="left:1353px;top:693px" width="9" height="9"><path d="M0.5 0.5 L4.5 4 L8.5 0.5 Z M0.5 5 L4.5 8.5 L8.5 5 Z" fill="#3a3a3a"/><rect x="0.5" y="3.8" width="8" height="1" fill="#3a3a3a"/></svg>

<!-- status bar -->
<div class="a s" style="left:8px;top:711.5px;font-size:11.2px;color:#2e2e2e;line-height:1">Страница: 4 из 24</div>
<div class="a" style="left:111px;top:709px;width:2px;height:17px;border-left:1px solid #b7bbc2;border-right:1px solid #fafbfc"></div>
<div class="a s" style="left:121px;top:711.5px;font-size:11.2px;color:#2e2e2e;line-height:1">Число слов: 6 121</div>
<div class="a" style="left:222px;top:709px;width:2px;height:17px;border-left:1px solid #b7bbc2;border-right:1px solid #fafbfc"></div>
<svg class="a" style="left:229px;top:709px" width="20" height="16" viewBox="0 0 20 16">
 <path d="M2 10 L9 6 L17 10 L10 14 Z" fill="#7aa0d8" stroke="#3a5a9a" stroke-width="0.8"/>
 <path d="M3 9 L9 5.5 L15 9 L10 12 Z" fill="#fff" stroke="#8aa" stroke-width="0.5"/>
 <path d="M11 1.5 L17.5 8 M17.5 1.5 L11 8" stroke="#e52020" stroke-width="2"/>
</svg>
<div class="a s" style="left:265px;top:711.5px;font-size:11.2px;color:#2e2e2e;line-height:1">русский</div>
<div class="a" style="left:315px;top:709px;width:2px;height:17px;border-left:1px solid #b7bbc2;border-right:1px solid #fafbfc"></div>
<div class="a" style="left:1088px;top:709px;width:2px;height:17px;border-left:1px solid #b7bbc2;border-right:1px solid #fafbfc"></div>
<div class="a" style="left:1094px;top:709px;width:19px;height:17px;border:1px solid #c29b3f;border-radius:2px;background:linear-gradient(180deg,#fde9a6,#fbd36a)"></div>
<svg class="a" style="left:1094px;top:709px" width="92" height="17" viewBox="0 0 92 17">
 <rect x="3.5" y="3" width="11" height="10.5" fill="#fff" stroke="#3a3a3a" stroke-width="1.3"/>
 <path d="M5.5 5.5 H12.5 M5.5 8 H12.5 M5.5 10.5 H12.5" stroke="#555" stroke-width="0.9"/>
 <path d="M22.5 3 H27.5 L28 4 L28.5 3 H33.5 V13 H28.5 L28 14 L27.5 13 H22.5 Z" fill="#fff" stroke="#444" stroke-width="1"/>
 <path d="M28 4 V13 M24 5.5 H26.5 M24 7.5 H26.5 M24 9.5 H26.5 M29.5 5.5 H32 M29.5 7.5 H32 M29.5 9.5 H32" stroke="#555" stroke-width="0.8"/>
 <rect x="39.5" y="3.5" width="10" height="9" fill="#fff" stroke="#444" stroke-width="1"/>
 <path d="M41 5.5 H47 M41 7.5 H46 M41 9.5 H44" stroke="#555" stroke-width="0.8"/>
 <circle cx="48" cy="11.5" r="3.3" fill="#2f7fc8"/><path d="M46 10 C47 9.5 48.5 10.5 49.5 11 C49 12.5 47.5 13 46.5 12.5 Z" fill="#3aa048"/>
 <path d="M60 4 H67 M62 6.5 H67 M62 9 H67 M60 11.5 H67" stroke="#555" stroke-width="1" stroke-dasharray="1.6 0.8"/>
 <path d="M59 4 H60 M59 11.5 H60 M61 6.5 H62 M61 9 H62" stroke="#444" stroke-width="1"/>
 <path d="M77 4 H87 M77 6.5 H87 M77 9 H87 M77 11.5 H87 M77 14 H87" stroke="#555" stroke-width="1"/>
</svg>
<div class="a s" style="left:1194px;top:711.5px;font-size:11.2px;color:#2e2e2e;line-height:1">140%</div>
<svg class="a" style="left:1228px;top:708px" width="134" height="19" viewBox="0 0 134 19">
 <defs><radialGradient id="zb" cx="0.5" cy="0.3" r="0.7"><stop offset="0" stop-color="#ffffff"/><stop offset="1" stop-color="#d4d7dc"/></radialGradient></defs>
 <circle cx="9" cy="9.5" r="7.5" fill="url(#zb)" stroke="#70747b" stroke-width="1"/>
 <rect x="5" y="8.5" width="8" height="2" fill="#333"/>
 <path d="M18 9.5 H117" stroke="#9a9ea5" stroke-width="1"/>
 <path d="M18 10.5 H117" stroke="#fff" stroke-width="1"/>
 <path d="M67.5 9 V13" stroke="#8a8e95" stroke-width="1"/>
 <path d="M69 3.5 H78 V11 L73.5 15 L69 11 Z" fill="url(#zb)" stroke="#70747b" stroke-width="1"/>
 <circle cx="125" cy="9.5" r="7.5" fill="url(#zb)" stroke="#70747b" stroke-width="1"/>
 <rect x="121" y="8.5" width="8" height="2" fill="#333"/><rect x="124" y="5.5" width="2" height="8" fill="#333"/>
</svg>

<!-- taskbar -->
<div class="a" style="left:0;top:728px;width:1366px;height:1px;background:#c7abab"></div>
<div class="a" style="left:7px;top:729px;width:1px;height:39px;background:#9a7c7c"></div>
<svg class="a" style="left:10px;top:733px" width="30" height="29" viewBox="0 0 30 29">
 <path d="M1.5 5 L12.5 3.3 V13.3 H1.5 Z M14 3.1 L28.5 1 V13.3 H14 Z M1.5 14.8 H12.5 V24.8 L1.5 23.2 Z M14 14.8 H28.5 V27.2 L14 25 Z" fill="#fbfbfb"/>
</svg>
<svg class="a" style="left:64px;top:731px" width="34" height="33" viewBox="0 0 34 33">
 <defs><radialGradient id="ie" cx="0.4" cy="0.35" r="0.7"><stop offset="0" stop-color="#bff0ff"/><stop offset="0.6" stop-color="#3cb4ea"/><stop offset="1" stop-color="#1a78c8"/></radialGradient></defs>
 <path d="M17 6 C24 6 28.5 11 28.5 17.5 V19 H11.5 C12 23 14.5 25 18 25 C21 25 23 24 24.5 22 H28.3 C26.5 27.5 22.5 30 17.5 30 C10.5 30 6 25 6 18 C6 11 10.5 6 17 6 Z M11.7 15 H23.5 C23 11.5 20.5 9.5 17.5 9.5 C14.5 9.5 12.3 11.5 11.7 15 Z" fill="url(#ie)"/>
 <path d="M4 30 C0 27 6 14 16 7 C25 1 32 0 33 3 C34 6 30 11 27 13 C29 9 30 5 28 4.5 C24 4 13 10 8 19 C5 25 5 29 8 29 C10 29 13 27 15 26 C10 30 6 31 4 30 Z" fill="#f3c41b" stroke="#c8901a" stroke-width="0.5"/>
</svg>
<div class="a" style="left:127px;top:732px;width:32px;height:32px;background:linear-gradient(180deg,#00dcd8,#00c4e8)"></div>
<svg class="a" style="left:127px;top:732px" width="32" height="32" viewBox="0 0 32 32">
 <circle cx="16" cy="16" r="13" fill="none" stroke="#1a3a8a" stroke-width="1.6"/>
 <circle cx="16" cy="9" r="3" fill="#1a3a8a"/><circle cx="9" cy="20" r="3" fill="#1a3a8a"/><circle cx="23" cy="20" r="3" fill="#1a3a8a"/>
 <path d="M11 13 A8 8 0 0 1 13 10.5 M19 10.5 A8 8 0 0 1 21 13 M12 23 A8 8 0 0 0 20 23" fill="none" stroke="#1a3a8a" stroke-width="1.6"/>
</svg>
<svg class="a" style="left:189px;top:731px" width="32" height="33" viewBox="0 0 32 33">
 <circle cx="16" cy="16.5" r="15" fill="#1da462"/>
 <path d="M16 16.5 L3 9 A15 15 0 0 1 29 9 Z" fill="#dd4b3e"/>
 <path d="M16 16.5 L29 9 A15 15 0 0 1 16 31.5 Z" fill="#ffcd42"/>
 <circle cx="16" cy="16.5" r="6.5" fill="#fff"/><circle cx="16" cy="16.5" r="5" fill="#4a8af4"/>
</svg>
<svg class="a" style="left:250px;top:731px" width="33" height="33" viewBox="0 0 33 33">
 <path d="M7 3 L31 6 V26 L9 22 Z" fill="#2a48c8" stroke="#d8dde8" stroke-width="1.5"/>
 <path d="M9 5 L29 8 V12 L9 9 Z" fill="#6ba0f0" opacity="0.6"/>
 <ellipse cx="17" cy="29" rx="8" ry="3.5" fill="#e8e8e8" stroke="#aaa" stroke-width="0.6"/>
 <rect x="15" y="22" width="4" height="6" fill="#ddd"/>
 <rect x="1.5" y="10" width="21" height="10" rx="1" fill="#4a8ae0" stroke="#e8f0ff" stroke-width="1"/>
 <path d="M4 12.5 H20 M4 15 H20 M6 17.5 H18" stroke="#fff" stroke-width="1.2" stroke-dasharray="1.5 1"/>
</svg>
<svg class="a" style="left:312px;top:731px" width="34" height="34" viewBox="0 0 34 34">
 <circle cx="17" cy="17.5" r="15.5" fill="#1aa2ea"/><circle cx="17" cy="17.5" r="13.5" fill="#1a1a1a"/>
 <path d="M22 12 A7 7 0 1 0 22 23" fill="none" stroke="#1aa2ea" stroke-width="3.2"/>
 <circle cx="25" cy="8" r="6.5" fill="#e53a3a"/>
 <path d="M22 10.5 C23.5 8.5 26.5 8.5 28 10.5" fill="none" stroke="#fff" stroke-width="1.2"/>
 <circle cx="23.3" cy="6" r="0.9" fill="#fff"/><circle cx="26.7" cy="6" r="0.9" fill="#fff"/>
</svg>
<svg class="a" style="left:375px;top:732px" width="32" height="32" viewBox="0 0 32 32">
 <circle cx="16" cy="16" r="15" fill="#e02a2a"/><circle cx="16" cy="16" r="12.5" fill="#151515"/>
 <path d="M15 7 L17 7 L17.5 9.5 L20 10.5 L22 9 L23.5 10.5 L22 12.5 L23 15 L25.5 15.5 V17.5 L23 18 L22 20.5 L23.5 22.5 L22 24 L20 22.5 L17.5 23.5 L17 26 H15 L14.5 23.5 L12 22.5 L10 24 L8.5 22.5 L10 20.5 L9 18 L6.5 17.5 V15.5 L9 15 L10 12.5 L8.5 10.5 L10 9 L12 10.5 L14.5 9.5 Z" fill="#e02a2a"/>
 <circle cx="16" cy="16.5" r="3.5" fill="#151515"/>
 <path d="M18 21 L26 11 L24 10 L28 7 L28 12 L26.5 11.5 L19.5 22 Z" fill="#e02a2a"/>
</svg>
<svg class="a" style="left:437px;top:732px" width="32" height="32" viewBox="0 0 32 32">
 <defs><linearGradient id="op" x1="0" y1="0" x2="0" y2="1"><stop offset="0" stop-color="#ff3b3b"/><stop offset="1" stop-color="#c40f1e"/></linearGradient></defs>
 <ellipse cx="16" cy="16" rx="15" ry="15.5" fill="url(#op)"/>
 <ellipse cx="16" cy="16" rx="6" ry="11.5" fill="#b49494"/>
</svg>
<svg class="a" style="left:499px;top:732px" width="32" height="32" viewBox="0 0 32 32">
 <circle cx="16" cy="16" r="15" fill="#f2f2f2"/>
 <path d="M9 8 L16 18 L23 8 M16 18 V27" fill="none" stroke="#e41b23" stroke-width="3.2"/>
</svg>
<div class="a" style="left:547px;top:729px;width:60px;height:38px;border:1px solid rgba(255,255,255,0.35);background:rgba(255,255,255,0.08)"></div>
<svg class="a" style="left:560px;top:734px" width="34" height="30" viewBox="0 0 34 30">
 <path d="M2 5 H12 L14 3 H30 V26 H2 Z" fill="#e8c858"/>
 <path d="M3 7 H29 V8 H3 Z" fill="#fff"/>
 <rect x="4" y="2" width="4" height="3" fill="#20b020"/><rect x="13" y="4" width="4" height="3" fill="#e03030"/><rect x="21" y="5" width="4" height="3" fill="#2080e0"/>
 <path d="M2 10 H32 V26 H2 Z" fill="#f7df8a" stroke="#d9b850" stroke-width="0.6"/>
 <path d="M6 18 H28 V29 H22 V23 H12 V29 H6 Z" fill="#6cc4ee" stroke="#3a8ac8" stroke-width="0.8"/>
</svg>
<div class="a" style="left:609px;top:729px;width:54px;height:38px;border:1px solid rgba(255,255,255,0.5);background:rgba(255,255,255,0.2)"></div>
<div class="a" style="left:663px;top:729px;width:5px;height:38px;border:1px solid rgba(255,255,255,0.5);border-left:none;background:rgba(255,255,255,0.2)"></div>
<svg class="a" style="left:618px;top:731px" width="34" height="32" viewBox="0 0 34 32">
 <rect x="2" y="1.5" width="27" height="29" rx="1.5" fill="#fff" stroke="#1e4fa0" stroke-width="1.4"/>
 <path d="M3 3 H28 V22 C20 18 10 20 3 24 Z" fill="#dce8f8"/>
 <text x="15.5" y="21" font-family="Liberation Sans" font-weight="bold" font-size="17" fill="#1a4fb8" text-anchor="middle" letter-spacing="-1">W</text>
 <path d="M19 17 L32 22 L29 29 L16 24 Z" fill="#fff" stroke="#9ab" stroke-width="0.6"/>
</svg>
<!-- tray -->
<svg class="a" style="left:1129px;top:746px" width="11" height="6"><path d="M0.5 5.5 L5.5 0.5 L10.5 5.5 Z" fill="#f2f2f2" stroke="#777" stroke-width="0.5"/></svg>
<svg class="a" style="left:1150px;top:740px" width="18" height="18" viewBox="0 0 18 18">
 <path d="M1.5 1 V17" stroke="#f4f4f4" stroke-width="1.5"/><path d="M2.5 2 C6 0 8 4 12 2 V10 C8 12 6 8 2.5 10 Z" fill="#f4f4f4" stroke="#555" stroke-width="0.6"/>
 <circle cx="11.5" cy="12.5" r="4.5" fill="#e33"/><path d="M9.5 10.5 L13.5 14.5 M13.5 10.5 L9.5 14.5" stroke="#fff" stroke-width="1.3"/>
</svg>
<svg class="a" style="left:1174px;top:740px" width="18" height="18" viewBox="0 0 18 18">
 <path d="M1 6 H4 L8.5 2 V15 L4 11 H1 Z" fill="#f4f4f4" stroke="#555" stroke-width="0.6"/>
 <circle cx="12.5" cy="12" r="4.5" fill="#e33"/><circle cx="12.5" cy="12" r="2.8" fill="#fff"/><path d="M10.5 10 L14.5 14" stroke="#e33" stroke-width="1.3"/>
</svg>
<svg class="a" style="left:1198px;top:740px" width="19" height="17" viewBox="0 0 19 17">
 <g fill="#7c7c7c" stroke="#3e3a3a" stroke-width="0.7"><rect x="1.5" y="11.5" width="2.6" height="3"/><rect x="4.6" y="8.5" width="2.6" height="6"/><rect x="7.7" y="7.5" width="2.6" height="7"/><rect x="10.8" y="5.5" width="2.6" height="9"/><rect x="13.9" y="2.5" width="2.6" height="12"/></g>
 <path d="M4.5 0.5 V7.5 M1 4 H8 M2 1.5 L7 6.5 M7 1.5 L2 6.5" stroke="#f6f6f6" stroke-width="1.2"/>
</svg>
<svg class="a" style="left:1222px;top:740px" width="18" height="18" viewBox="0 0 18 18">
 <path d="M2.5 1 V4.5 M5.5 1 V4.5" stroke="#fff" stroke-width="1.3"/>
 <rect x="1" y="4.5" width="6" height="3.5" fill="#fff" stroke="#4a4040" stroke-width="0.5"/>
 <path d="M4 8 V16.5" stroke="#fff" stroke-width="1.5"/>
 <rect x="8.5" y="2" width="8.5" height="14.5" rx="1" fill="none" stroke="#fff" stroke-width="1.6"/>
 <rect x="10.5" y="4" width="4.5" height="10.5" fill="#fff"/>
</svg>
<div class="a s" style="left:1254px;top:743.3px;font-size:12.4px;color:#f8f2f2;line-height:1">РУС</div>
<div class="a s" style="left:1309px;top:735.5px;font-size:12.2px;color:#f8f2f2;line-height:1">9:47</div>
<div class="a s" style="left:1292px;top:752px;font-size:12px;color:#f8f2f2;line-height:1">27.11.2019</div>

</body></html>
